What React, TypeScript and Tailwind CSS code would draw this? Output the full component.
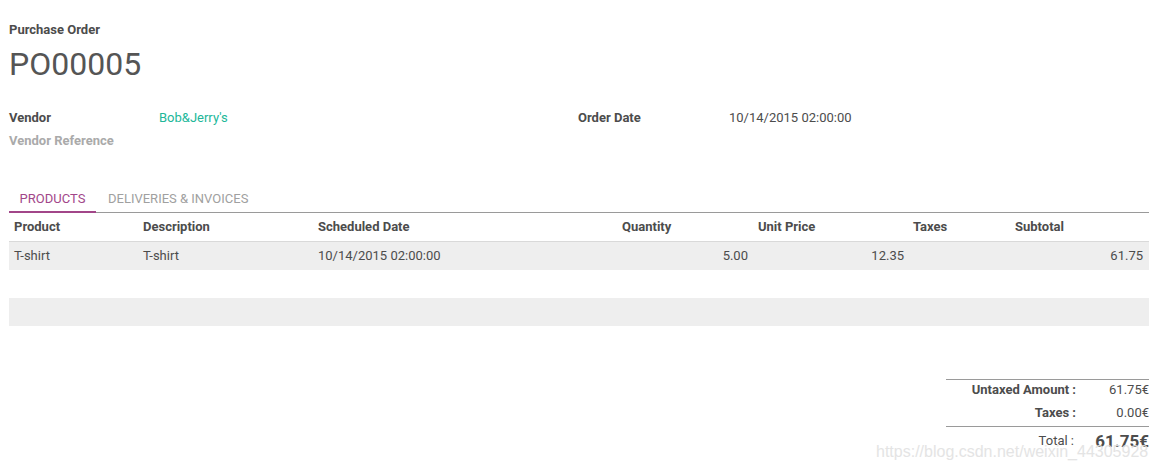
import React from 'react';

interface Line {
  product: string;
  description: string;
  date: string;
  qty: string;
  price: string;
  taxes: string;
  subtotal: string;
}

const lines: Line[] = [
  {
    product: 'T-shirt',
    description: 'T-shirt',
    date: '10/14/2015 02:00:00',
    qty: '5.00',
    price: '12.35',
    taxes: '',
    subtotal: '61.75',
  },
];

const cols = 'grid grid-cols-[129px_175px_305px_136px_156px_100px_139px]';

export default function App() {
  return (
    <div className="relative h-[467px] w-[1156px] overflow-hidden bg-white font-['Roboto',sans-serif] text-[13px] text-[#4c4c4c]">
      <div className="pl-[9px] pr-[7px] pt-[22px]">
        {/* Title */}
        <div className="text-[13px] font-bold leading-[16px]">Purchase Order</div>
        <h1 className="mt-[9px] text-[32px] leading-[34px] font-normal text-[#555555]">PO00005</h1>

        {/* Header fields */}
        <div className="mt-[29px] grid grid-cols-[569px_1fr]">
          <div className="flex flex-col gap-[7px]">
            <div className="flex leading-[16px]">
              <span className="w-[150px] font-bold">Vendor</span>
              <span className="text-[#21b799]">Bob&amp;Jerry's</span>
            </div>
            <div className="flex leading-[16px]">
              <span className="w-[150px] font-bold text-[#aaaaaa]">Vendor Reference</span>
            </div>
          </div>
          <div className="flex leading-[16px]">
            <span className="w-[151px] font-bold">Order Date</span>
            <span>10/14/2015 02:00:00</span>
          </div>
        </div>

        {/* Tabs */}
        <div className="mt-[42px] flex border-b border-[#9a9a9a]">
          <div className="relative w-[87px] pb-[5px] text-center text-[13px] uppercase leading-[16px] text-[#a24689]">
            Products
            <div className="absolute bottom-[-1px] left-0 h-[2px] w-full bg-[#a24689]" />
          </div>
          <div className="pl-[12px] pb-[5px] text-[13px] uppercase leading-[16px] text-[#a0a0a0]">
            Deliveries &amp; Invoices
          </div>
        </div>

        {/* Table */}
        <div className={`${cols} h-[29px] items-center border-b border-[#d9d9d9] font-bold`}>
          <div className="pl-[5px]">Product</div>
          <div className="pl-[5px]">Description</div>
          <div className="pl-[5px]">Scheduled Date</div>
          <div className="pl-[4px]">Quantity</div>
          <div className="pl-[4px]">Unit Price</div>
          <div className="pl-[3px]">Taxes</div>
          <div className="pl-[5px]">Subtotal</div>
        </div>
        {lines.map((l, i) => (
          <div key={i} className={`${cols} h-[28px] items-center bg-[#eeeeee]`}>
            <div className="pl-[5px]">{l.product}</div>
            <div className="pl-[5px]">{l.description}</div>
            <div className="pl-[5px]">{l.date}</div>
            <div className="pr-[6px] text-right">{l.qty}</div>
            <div className="pr-[6px] text-right">{l.price}</div>
            <div className="pr-[6px] text-right">{l.taxes}</div>
            <div className="pr-[6px] text-right">{l.subtotal}</div>
          </div>
        ))}
        <div className="h-[28px]" />
        <div className="h-[28px] bg-[#eeeeee]" />

        {/* Totals */}
        <div className="mt-[53px] flex justify-end">
          <div className="w-[203px]">
            <div className="border-t border-[#9a9a9a]">
              <div className="flex h-[20px] items-center">
                <span className="w-[130px] text-right font-bold">Untaxed Amount :</span>
                <span className="flex-1 text-right">61.75€</span>
              </div>
              <div className="mt-[3px] flex h-[20px] items-center">
                <span className="w-[130px] text-right font-bold">Taxes :</span>
                <span className="flex-1 text-right">0.00€</span>
              </div>
            </div>
            <div className="mt-[3px] flex h-[26px] items-end border-t border-[#9a9a9a] pb-[1px]">
              <span className="w-[128px] pb-[1px] text-right">Total :</span>
              <span className="flex-1 text-right text-[17px] font-bold leading-[20px]">61.75€</span>
            </div>
          </div>
        </div>
      </div>

      {/* Watermark */}
      <div className="pointer-events-none absolute left-[876px] top-[440px] font-['Liberation_Sans',sans-serif] text-[16px] text-[#e2e2e2] opacity-90">
        https://blog.csdn.net/weixin_44305928
      </div>
    </div>
  );
}
